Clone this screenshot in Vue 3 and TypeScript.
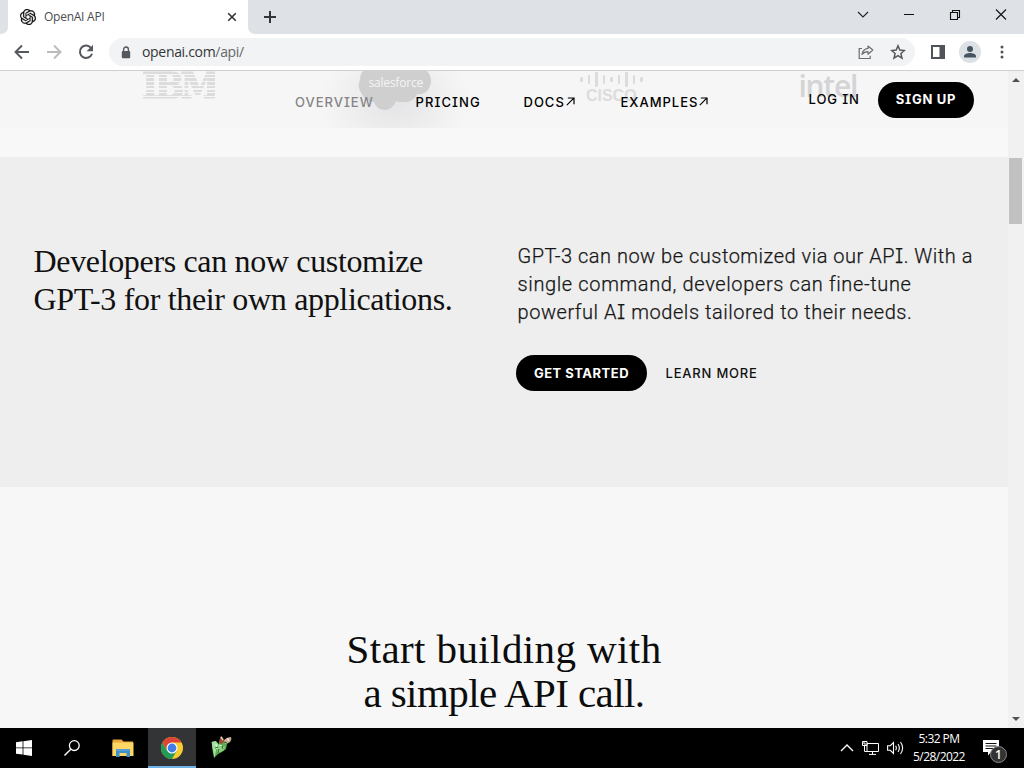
<script setup lang="ts">
interface NavItem {
  label: string
  key: string
  external?: boolean
  muted?: boolean
}

const nav: NavItem[] = [
  { label: 'OVERVIEW', key: 'overview', muted: true },
  { label: 'PRICING', key: 'pricing' },
  { label: 'DOCS', key: 'docs', external: true },
  { label: 'EXAMPLES', key: 'examples', external: true },
]

const ciscoBars: number[] = [5, 9, 15, 9, 5, 9, 15, 9, 5]
</script>

<template>
  <div class="desktop">
    <div class="tabstrip">
      <div class="strip-edge"></div>
      <div class="tab">
        <svg class="favicon" viewBox="0 0 24 24" width="16" height="16"><path fill="#111" stroke="#111" stroke-width=".35" d="M22.2819 9.8211a5.9847 5.9847 0 0 0-.5157-4.9108 6.0462 6.0462 0 0 0-6.5098-2.9A6.0651 6.0651 0 0 0 4.9807 4.1818a5.9847 5.9847 0 0 0-3.9977 2.9 6.0462 6.0462 0 0 0 .7427 7.0966 5.98 5.98 0 0 0 .511 4.9107 6.051 6.051 0 0 0 6.5146 2.9001A5.9847 5.9847 0 0 0 13.2599 24a6.0557 6.0557 0 0 0 5.7718-4.2058 5.9894 5.9894 0 0 0 3.9977-2.9001 6.0557 6.0557 0 0 0-.7475-7.0729zm-9.022 12.6081a4.4755 4.4755 0 0 1-2.8764-1.0408l.1419-.0804 4.7783-2.7582a.7948.7948 0 0 0 .3927-.6813v-6.7369l2.02 1.1686a.071.071 0 0 1 .038.0615v5.5826a4.504 4.504 0 0 1-4.4945 4.4944zm-9.6607-4.1254a4.4708 4.4708 0 0 1-.5346-3.0137l.142.0852 4.783 2.7582a.7712.7712 0 0 0 .7806 0l5.8428-3.3685v2.3324a.0804.0804 0 0 1-.0332.0615L9.74 19.9502a4.4992 4.4992 0 0 1-6.1408-1.6464zM2.3408 7.8956a4.485 4.485 0 0 1 2.3655-1.9728V11.6a.7664.7664 0 0 0 .3879.6765l5.8144 3.3543-2.0201 1.1685a.0757.0757 0 0 1-.071 0l-4.8303-2.7865A4.504 4.504 0 0 1 2.3408 7.872zm16.5963 3.8558L13.1038 8.364 15.1192 7.2a.0757.0757 0 0 1 .071 0l4.8303 2.7913a4.4944 4.4944 0 0 1-.6765 8.1042v-5.6772a.79.79 0 0 0-.407-.667zm2.0107-3.0231l-.142-.0852-4.7735-2.7818a.7759.7759 0 0 0-.7854 0L9.409 9.2297V6.8974a.0662.0662 0 0 1 .0284-.0615l4.8303-2.7866a4.4992 4.4992 0 0 1 6.6802 4.66zM8.3065 12.863l-2.02-1.1638a.0804.0804 0 0 1-.038-.0567V6.0742a4.4992 4.4992 0 0 1 7.3757-3.4537l-.142.0805L8.704 5.459a.7948.7948 0 0 0-.3927.6813zm1.0976-2.3654l2.602-1.4998 2.6069 1.4998v2.9994l-2.5974 1.4997-2.6067-1.4997Z" /></svg>
        <span class="tab-title">OpenAI API</span>
        <svg class="tab-close" viewBox="0 0 10 10" width="10" height="10"><path d="M1.2 1.2l7.6 7.6M8.8 1.2L1.2 8.8" stroke="#333" stroke-width="1.6" /></svg>
      </div>
      <div class="strip-rest">
        <svg class="newtab" viewBox="0 0 14 14" width="14" height="14"><path d="M7 1v12M1 7h12" stroke="#333639" stroke-width="2" /></svg>
        <div class="winctl">
          <svg viewBox="0 0 12 12" width="12" height="12"><path d="M1 3l5 5 5-5" fill="none" stroke="#222" stroke-width="1.1" /></svg>
          <svg viewBox="0 0 12 12" width="12" height="12"><path d="M1 5.5h10" stroke="#111" /></svg>
          <svg viewBox="0 0 12 12" width="12" height="12"><path d="M1.5 3.5h7v7h-7zM3.5 3.5v-2h7v7h-2" fill="none" stroke="#111" stroke-width="1.1" /></svg>
          <svg viewBox="0 0 12 12" width="12" height="12"><path d="M1 .5l10 10M11 .5L1 10.500" stroke="#111" stroke-width="1.1" /></svg>
        </div>
      </div>
    </div>

    <div class="toolbar">
      <div class="navbtns">
        <svg viewBox="0 0 16 16" width="16" height="16"><path d="M15 8H2M8 1.5L1.5 8 8 14.5" fill="none" stroke="#55585c" stroke-width="1.9" /></svg>
        <svg viewBox="0 0 16 16" width="16" height="16"><path d="M1 8h13M8 1.5L14.5 8 8 14.5" fill="none" stroke="#babcbe" stroke-width="1.9" /></svg>
        <svg viewBox="0 0 16 16" width="16" height="16"><path d="M13.2 4.2A6.2 6.2 0 1 0 14 9.7" fill="none" stroke="#55585c" stroke-width="2" /><path d="M15 .8v6.4H8.6z" fill="#55585c" /></svg>
      </div>
      <div class="omnibox">
        <svg class="lock" viewBox="0 0 10 13" width="10" height="13"><path d="M2.6 5.5V3.4a2.4 2.4 0 0 1 4.8 0v2.1" fill="none" stroke="#55585c" stroke-width="1.4" /><rect x=".8" y="4.9" width="8.4" height="7.4" rx="1" fill="#55585c" /></svg>
        <span class="url">openai.com<span class="path">/api/</span></span>
        <svg class="share" viewBox="0 0 16 16" width="16" height="16"><path d="M4 4.5H1.2v10h11v-2.7" fill="none" stroke="#6a6d70" stroke-width="1.2" /><path d="M10 2l4.8 4L10 10.2V7.7C7.4 7.7 5.5 8.4 4 10.5 4.5 7.2 6.3 4.8 10 4.4z" fill="none" stroke="#6a6d70" stroke-width="1.2" stroke-linejoin="round" /></svg>
        <svg class="star" viewBox="0 0 16 16" width="16" height="16"><path d="M8 1.8l1.8 4.3 4.6.4-3.5 3 1.1 4.6L8 11.7l-4 2.4 1.1-4.6-3.5-3 4.6-.4z" fill="none" stroke="#55585c" stroke-width="1.5" /></svg>
      </div>
      <div class="tools">
        <svg viewBox="0 0 14 14" width="14" height="14"><rect x="1" y="1" width="12" height="12" fill="none" stroke="#505357" stroke-width="2" /><rect x="8.5" y="1" width="5" height="12" fill="#505357" /></svg>
        <svg viewBox="0 0 22 22" width="22" height="22"><circle cx="11" cy="11" r="11" fill="#dce1e6" /><circle cx="11" cy="8" r="3" fill="#475361" /><path d="M5 16.5v-1.2c0-2.2 3.5-3.2 6-3.2s6 1 6 3.2v1.2z" fill="#475361" /></svg>
        <svg viewBox="0 0 4 14" width="4" height="14"><circle cx="2" cy="2" r="1.5" fill="#505357" /><circle cx="2" cy="7" r="1.5" fill="#505357" /><circle cx="2" cy="12" r="1.5" fill="#505357" /></svg>
      </div>
    </div>

    <div class="viewport">
      <main class="page">
        <section class="customers">
          <div class="logo ibm"><span>IBM</span></div>
          <div class="logo salesforce">
            <svg viewBox="0 0 74 42" width="74" height="42"><path d="M5 0h64c4 4 5 10 3 15-2 6-7 9-13 8-2 5-7 9-14 8-3 0-5 0-7-1-2 5-6 9-11 9s-9-3-11-8c-5 0-10-3-12-8C2 21-1 15 2 9c0-4 1-7 3-9z" fill="#cfcfd0" /></svg>
            <span>salesforce</span>
          </div>
          <div class="logo cisco">
            <div class="bars"><i v-for="(h, i) in ciscoBars" :key="i" :style="{ height: h + 'px' }"></i></div>
            <span>CISCO</span>
          </div>
          <div class="logo intel"><span>intel</span></div>
        </section>

        <header class="site-header">
          <nav>
            <a v-for="item in nav" :key="item.key" :class="[item.key, { muted: item.muted }]">
              <span>{{ item.label }}</span>
              <svg v-if="item.external" viewBox="0 0 9 9" width="9" height="9"><path d="M.8 8.2l7-7M1.8 1h6.200v6.200" fill="none" stroke="#000" stroke-width="1.2" /></svg>
            </a>
          </nav>
          <a class="login">LOG IN</a>
          <a class="pill signup">SIGN UP</a>
        </header>

        <section class="customize">
          <h2><span class="l1">Developers can now customize</span><br /><span class="l2">GPT-3 for their own applications.</span></h2>
          <div class="copy">
            <p>
              <span class="p1">GPT-3 can now be customized via our AP<b>I</b>. With a</span><br />
              <span class="p2">single command, developers can fine-tune</span><br />
              <span class="p3">powerful A<b>I</b> models tailored to their needs.</span>
            </p>
            <div class="actions">
              <a class="pill start">GET STARTED</a>
              <a class="learn">LEARN MORE</a>
            </div>
          </div>
        </section>

        <section class="build">
          <h1><span class="l1">Start building with</span><br /><span class="l2">a simple API call.</span></h1>
        </section>
      </main>
      <div class="scrollbar">
        <svg viewBox="0 0 8 4" width="8" height="4"><path d="M0 4l4-4 4 4z" fill="#505050" /></svg>
        <div class="thumb"></div>
        <svg class="down" viewBox="0 0 8 4" width="8" height="4"><path d="M0 0l4 4 4-4z" fill="#505050" /></svg>
      </div>
    </div>

    <footer class="taskbar">
      <div class="slot"><svg viewBox="0 0 16 16" width="16" height="16" fill="#fff"><path d="M0 2.3L6.6 1.3v6.2H0zM7.4 1.2L16 0v7.5H7.4zM0 8.3h6.6v6.3L0 13.7zM7.4 8.3H16V16l-8.6-1.2z" /></svg></div>
      <div class="slot"><svg viewBox="0 0 16 16" width="16" height="16"><circle cx="10.3" cy="5.6" r="4.9" fill="none" stroke="#fff" stroke-width="1.3" /><path d="M6.8 9.2L.5 15.5" stroke="#fff" stroke-width="1.4" /></svg></div>
      <div class="slot folder"><svg viewBox="0 0 22 18" width="22" height="18"><path d="M.5 1.5a1 1 0 0 1 1-1h8l2 2h9.5v14.5H.5z" fill="#e9a93a" /><path d="M.5 3.5h21V17H.5z" fill="#fbd665" /><path d="M4 18v-7.5h14V18h-3.5v-4h-7v4z" fill="#3f8fcb" /><path d="M4 10h14v2H4z" fill="#559dd2" /></svg></div>
      <div class="slot active">
        <svg viewBox="0 0 22 22" width="22" height="22"><circle cx="11" cy="11" r="11" fill="#f8cb2e" /><path d="M1.47 5.5A11 11 0 0 0 11 22l4.76-8.25L11 11 6.24 13.75z" fill="#239b57" /><path d="M1.47 5.5A11 11 0 0 1 20.53 5.5H11L6.24 13.75z" fill="#db4437" /><circle cx="11" cy="11" r="5.5" fill="#fff" /><circle cx="11" cy="11" r="4.4" fill="#3f7ee8" /></svg>
      </div>
      <div class="slot parrot"><svg viewBox="0 0 22 22" width="22" height="22"><path d="M2 6l4-1 3 3c0-3 1-6 2-8l2 2 1 3 3-3 4-1c1 2 0 4-1 5l-3 2-1 5-4 3-4 2-4 4-1-5-1-6z" fill="#58ad50" /><path d="M1.5 6l4-1 3 4-2 3-1 5-1 5-1-5-1-6z" fill="#a5dfa0" /><path d="M8 9l4 2 3-1-1 4-4 2-3 1z" fill="#8fd07f" /><path d="M11 0l2 2 1 4-3 2-2-1z" fill="#a84938" /><path d="M14 4l3-2 4-1-1 5-3 1-2 1z" fill="#d9a49c" /><path d="M11 1l2 3M17 2.5l2 2M9 9l3 1M6 8l1 5" stroke="#e9f4e6" stroke-width="1.1" /><path d="M14 6l3 1M5 12l3-1M12 10l1 3M9 13l-1 4" stroke="#2b6a31" /></svg></div>
      <div class="tray">
        <svg viewBox="0 0 14 8" width="14" height="8"><path d="M1 7l6-6 6 6" fill="none" stroke="#fff" stroke-width="1.4" /></svg>
        <svg class="net" viewBox="0 0 17 14" width="17" height="14"><path d="M5 2.5h11.500v8H5zM10.5 10.5v3M7 13.4h7M2.5 5v5.500h3M.5.5h4.500v4H.5zM2 .5v2.500h2" fill="none" stroke="#fff" /></svg>
        <svg class="vol" viewBox="0 0 17 14" width="17" height="14"><path d="M.6 4.7h2.7L6.5 1.5v11L3.3 9.3H.6z M8.6 4.7q1.5 2.3 0 4.6M11 3q2.7 4 0 8M13.5 1q4.2 6 0 12" fill="none" stroke="#fff" stroke-width="1.1" /></svg>
        <div class="clock"><span class="time">5:32 PM</span><span class="date">5/28/2022</span></div>
        <div class="notice">
          <svg viewBox="0 0 16 16" width="16" height="16"><path d="M0 0h16v12H8l-3 3.5V12H0z" fill="#fff" /><path d="M2.5 3.5h11M2.5 6h11M2.5 8.5h8" stroke="#111" /></svg>
          <span class="count">1</span>
        </div>
      </div>
    </footer>
  </div>
</template>

<style>
body { margin: 0; overflow: hidden; }
</style>

<style scoped>
* { box-sizing: border-box; }
svg { display: block; flex: none; }
.desktop { width: 1024px; height: 768px; display: flex; flex-direction: column; overflow: hidden; font-family: "Open Sans", "Noto Sans", sans-serif; background: #f7f7f7; }

.tabstrip { height: 34px; display: flex; background: #fff; flex: none; }
.strip-edge { width: 8px; background: #dee1e6; border-bottom-right-radius: 7px; }
.tab { width: 240px; background: #fff; display: flex; align-items: center; padding: 0 11px 0 12px; }
.tab-title { margin-left: 8px; font-size: 12px; letter-spacing: -0.25px; color: #4a4d51; flex: 1; white-space: nowrap; margin-top: -1px; }
.strip-rest { flex: 1; background: #dee1e6; border-bottom-left-radius: 7px; display: flex; justify-content: space-between; padding: 0 17px 0 15px; align-items: center; }
.winctl { display: flex; gap: 34px; margin-top: -5px; }

.toolbar { height: 37px; flex: none; display: flex; align-items: center; background: #fff; border-bottom: 1px solid #cfcfd0; padding: 0 20px 0 14px; }
.navbtns { display: flex; gap: 16px; }
.omnibox { margin-left: 15px; width: 806px; height: 28px; border-radius: 14px; background: #f1f3f4; display: flex; align-items: center; padding: 0 9px 0 12px; }
.url { margin-left: 11px; flex: 1; font-size: 14px; letter-spacing: -0.32px; color: #333639; margin-top: -1px; }
.path { color: #65686c; }
.star { margin-left: 16px; }
.tools { display: flex; align-items: center; margin-left: 16px; gap: 14px; }
.tools svg:last-child { margin-left: 5px; }

.viewport { height: 657px; flex: none; display: flex; }
.page { width: 1008px; position: relative; overflow: hidden; }
.customers { height: 86px; display: grid; grid-template-columns: repeat(4, 216.5px); padding-left: 70px; background: linear-gradient(#f6f6f6 0, #f6f6f6 57px, #f8f8f8 57px); color: #dcdcdd; }
.logo { position: relative; display: flex; justify-content: center; height: 57px; line-height: 1; }
.ibm span { font: bold 35px/30px "DejaVu Serif", serif; letter-spacing: -3.8px; -webkit-text-stroke: 1.2px #dcdcdd; margin: 0 0 0 1px; -webkit-mask: repeating-linear-gradient(#000 0 2.5px, transparent 2.5px 3.7px); mask: repeating-linear-gradient(#000 0 2.5px, transparent 2.5px 3.7px); height: 30px; }
.salesforce { background: radial-gradient(ellipse 75px 60px at 50% 30px, #e4e4e6, #f6f6f600); }
.salesforce span { position: absolute; left: 82px; top: 5px; font: 12px/14px "Open Sans", sans-serif; color: #f4f4f4; letter-spacing: -0.2px; }
.cisco { flex-direction: column; align-items: center; justify-content: flex-start; }
.bars { display: flex; gap: 5px; height: 17px; align-items: center; margin-left: 0; }
.bars i { width: 2.5px; background: #dcdcdd; border-radius: 1px; }
.cisco span { font: bold 16px/16px "Liberation Sans", sans-serif; letter-spacing: 0; }
.intel span { font: 600 30px/28px "Open Sans", sans-serif; letter-spacing: -1.3px; color: #d4d4d6; padding-top: 1px; }

.site-header { position: absolute; left: 0; top: 0; width: 1008px; height: 57px; display: flex; align-items: center; font: 500 13px/16px Inter, sans-serif; font-feature-settings: "cv08" 1; color: #000; }
nav { display: flex; margin-left: 295px; width: 513.5px; padding-top: 4px; letter-spacing: 1px; }
nav a { display: flex; align-items: center; gap: 1px; white-space: nowrap; }
nav a svg { margin-top: -1px; }
.overview { width: 120.5px; }
.pricing { width: 108px; letter-spacing: 1.1px; }
.docs { width: 97px; }
.muted { color: #858586; }
.login { width: 69.5px; letter-spacing: .9px; white-space: nowrap; margin-top: -1px; }
.pill { height: 36px; border-radius: 18px; background: #000; color: #fff; font: 700 13px/36px Inter, sans-serif; font-feature-settings: "cv08" 1; letter-spacing: .5px; text-align: center; white-space: nowrap; }
.signup { width: 96px; margin-top: 1px; letter-spacing: .7px; line-height: 35px; }

.customize { height: 330px; background: #eee; display: flex; color: #111; }
.customize h2 { margin: 85px 0 0 33.5px; width: 484px; font: 400 32px/38px "Liberation Serif", serif; white-space: nowrap; }
.customize .l1 { letter-spacing: -0.34px; }
.customize .l2 { letter-spacing: -0.33px; }
.copy { padding-top: 85px; }
.copy p { margin: 0; font: 300 20px/28px Roboto, sans-serif; color: #161616; -webkit-text-stroke: .25px #161616; white-space: nowrap; height: 84px; }
.copy p b { font-family: Inter, sans-serif; font-weight: 300; font-size: 19.5px; font-feature-settings: "cv08" 1; }
.p1 { letter-spacing: .51px; }
.p2 { letter-spacing: .63px; }
.p3 { letter-spacing: .55px; }
.actions { display: flex; margin: 29px 0 0 -1.5px; align-items: center; font-size: 13px; }
.start { width: 131px; }
.learn { margin-left: 18.5px; font: 500 13px/16px Inter, sans-serif; letter-spacing: .8px; color: #111; }

.build { height: 241px; text-align: center; }
.build h1 { margin: 0; padding-top: 140px; font: 400 41px/44px "Liberation Serif", serif; color: #0c0c0c; white-space: nowrap; }
.build .l1 { letter-spacing: .4px; }
.build .l2 { letter-spacing: -0.58px; }

.scrollbar { width: 16px; background: #f1f1f1; display: flex; flex-direction: column; align-items: center; padding: 7px 1px 7px 0; }
.thumb { width: 13px; height: 66px; margin-top: 76px; background: #c1c1c1; }
.down { margin-top: auto; }

.taskbar { height: 40px; flex: none; background: #000; display: flex; color: #fff; }
.slot { width: 48px; display: flex; align-items: center; justify-content: center; }
.folder { padding-left: 5px; }
.active { background: #333435; border-bottom: 2px solid #6fb2e6; padding-top: 2px; width: 48px; margin-left: 4px; }
.parrot { padding-bottom: 3px; padding-left: 2px; }
.tray { margin-left: auto; display: flex; align-items: center; padding-right: 15px; }
.net { margin-left: 8px; }
.vol { margin-left: 8px; }
.clock { width: 56px; margin-left: 7px; display: flex; flex-direction: column; align-items: center; font-size: 12px; line-height: 18px; letter-spacing: -0.55px; white-space: nowrap; padding-bottom: 1px; }
.notice { position: relative; margin-left: 16px; width: 26px; height: 16px; }
.count { position: absolute; left: 7px; top: 6px; width: 17px; height: 17px; border-radius: 50%; background: #333; border: 1px solid #888; font: 600 12px/15px "Open Sans", sans-serif; text-align: center; }
</style>
